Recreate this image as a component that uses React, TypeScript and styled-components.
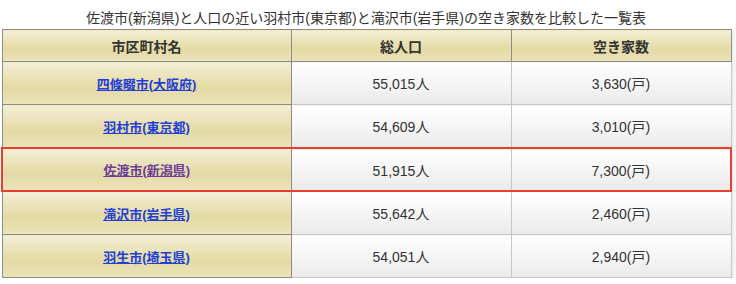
import React from "react";
import styled, { createGlobalStyle } from "styled-components";

const GlobalStyle = createGlobalStyle`
  body {
    margin: 0;
    background: #fff;
    font-family: "Liberation Sans", "Noto Sans CJK JP", sans-serif;
    color: #333;
  }
`;

const Wrapper = styled.div`
  width: 730px;
  padding: 8px 0 0 1px;
`;

const Caption = styled.div`
  text-align: center;
  font-size: 14px;
  line-height: 20px;
  height: 21px;
  color: #333;
`;

const Table = styled.table`
  width: 729px;
  border-collapse: collapse;
  table-layout: fixed;
  box-shadow: 3px 2px 4px rgba(0, 0, 0, 0.08);
`;

const HeadCell = styled.th`
  height: 31px;
  padding: 0;
  font-size: 14px;
  font-weight: bold;
  color: #333;
  border: 1px solid #8f8c80;
  background: linear-gradient(to bottom, #f4eed6 0%, #e4daa4 60%, #ebe3bb 100%);
`;

const NameCell = styled.td`
  height: 42px;
  padding: 0;
  text-align: center;
  border: 1px solid #8f8c80;
  background: linear-gradient(to bottom, #f4eed6 0%, #e4daa4 60%, #ebe3bb 100%);
`;

const ValueCell = styled.td`
  height: 42px;
  padding: 0;
  text-align: center;
  font-size: 14px;
  color: #333;
  border: 1px solid #c6c6c6;
  background: linear-gradient(to bottom, #ffffff 0%, #f4f4f4 55%, #eaeaea 100%);
`;

const Row = styled.tr<{ $hl?: boolean }>`
  ${({ $hl }) =>
    $hl
      ? `
    & > td { height: 41px; border-top: 2px solid #e83e2e; border-bottom: 2px solid #e83e2e; }
    & > td:first-child { border-left: 2px solid #e83e2e; }
    & > td:last-child { border-right: 2px solid #e83e2e; }
  `
      : ""}
`;

const CityLink = styled.a<{ $visited?: boolean }>`
  font-size: 13px;
  font-weight: bold;
  color: ${({ $visited }) => ($visited ? "#6a3d9a" : "#1f3fd6")};
  text-decoration: underline;
`;

const rows = [
  { name: "四條畷市(大阪府)", pop: "55,015人", vacant: "3,630(戸)" },
  { name: "羽村市(東京都)", pop: "54,609人", vacant: "3,010(戸)" },
  { name: "佐渡市(新潟県)", pop: "51,915人", vacant: "7,300(戸)", hl: true },
  { name: "滝沢市(岩手県)", pop: "55,642人", vacant: "2,460(戸)" },
  { name: "羽生市(埼玉県)", pop: "54,051人", vacant: "2,940(戸)" },
];

export default function App() {
  return (
    <>
      <GlobalStyle />
      <Wrapper>
        <Caption>
          佐渡市(新潟県)と人口の近い羽村市(東京都)と滝沢市(岩手県)の空き家数を比較した一覧表
        </Caption>
        <Table>
          <colgroup>
            <col style={{ width: "289px" }} />
            <col style={{ width: "220px" }} />
            <col style={{ width: "220px" }} />
          </colgroup>
          <thead>
            <tr>
              <HeadCell>市区町村名</HeadCell>
              <HeadCell>総人口</HeadCell>
              <HeadCell>空き家数</HeadCell>
            </tr>
          </thead>
          <tbody>
            {rows.map((r) => (
              <Row key={r.name} $hl={r.hl}>
                <NameCell>
                  <CityLink href="#" $visited={r.hl}>
                    {r.name}
                  </CityLink>
                </NameCell>
                <ValueCell>{r.pop}</ValueCell>
                <ValueCell>{r.vacant}</ValueCell>
              </Row>
            ))}
          </tbody>
        </Table>
      </Wrapper>
    </>
  );
}
